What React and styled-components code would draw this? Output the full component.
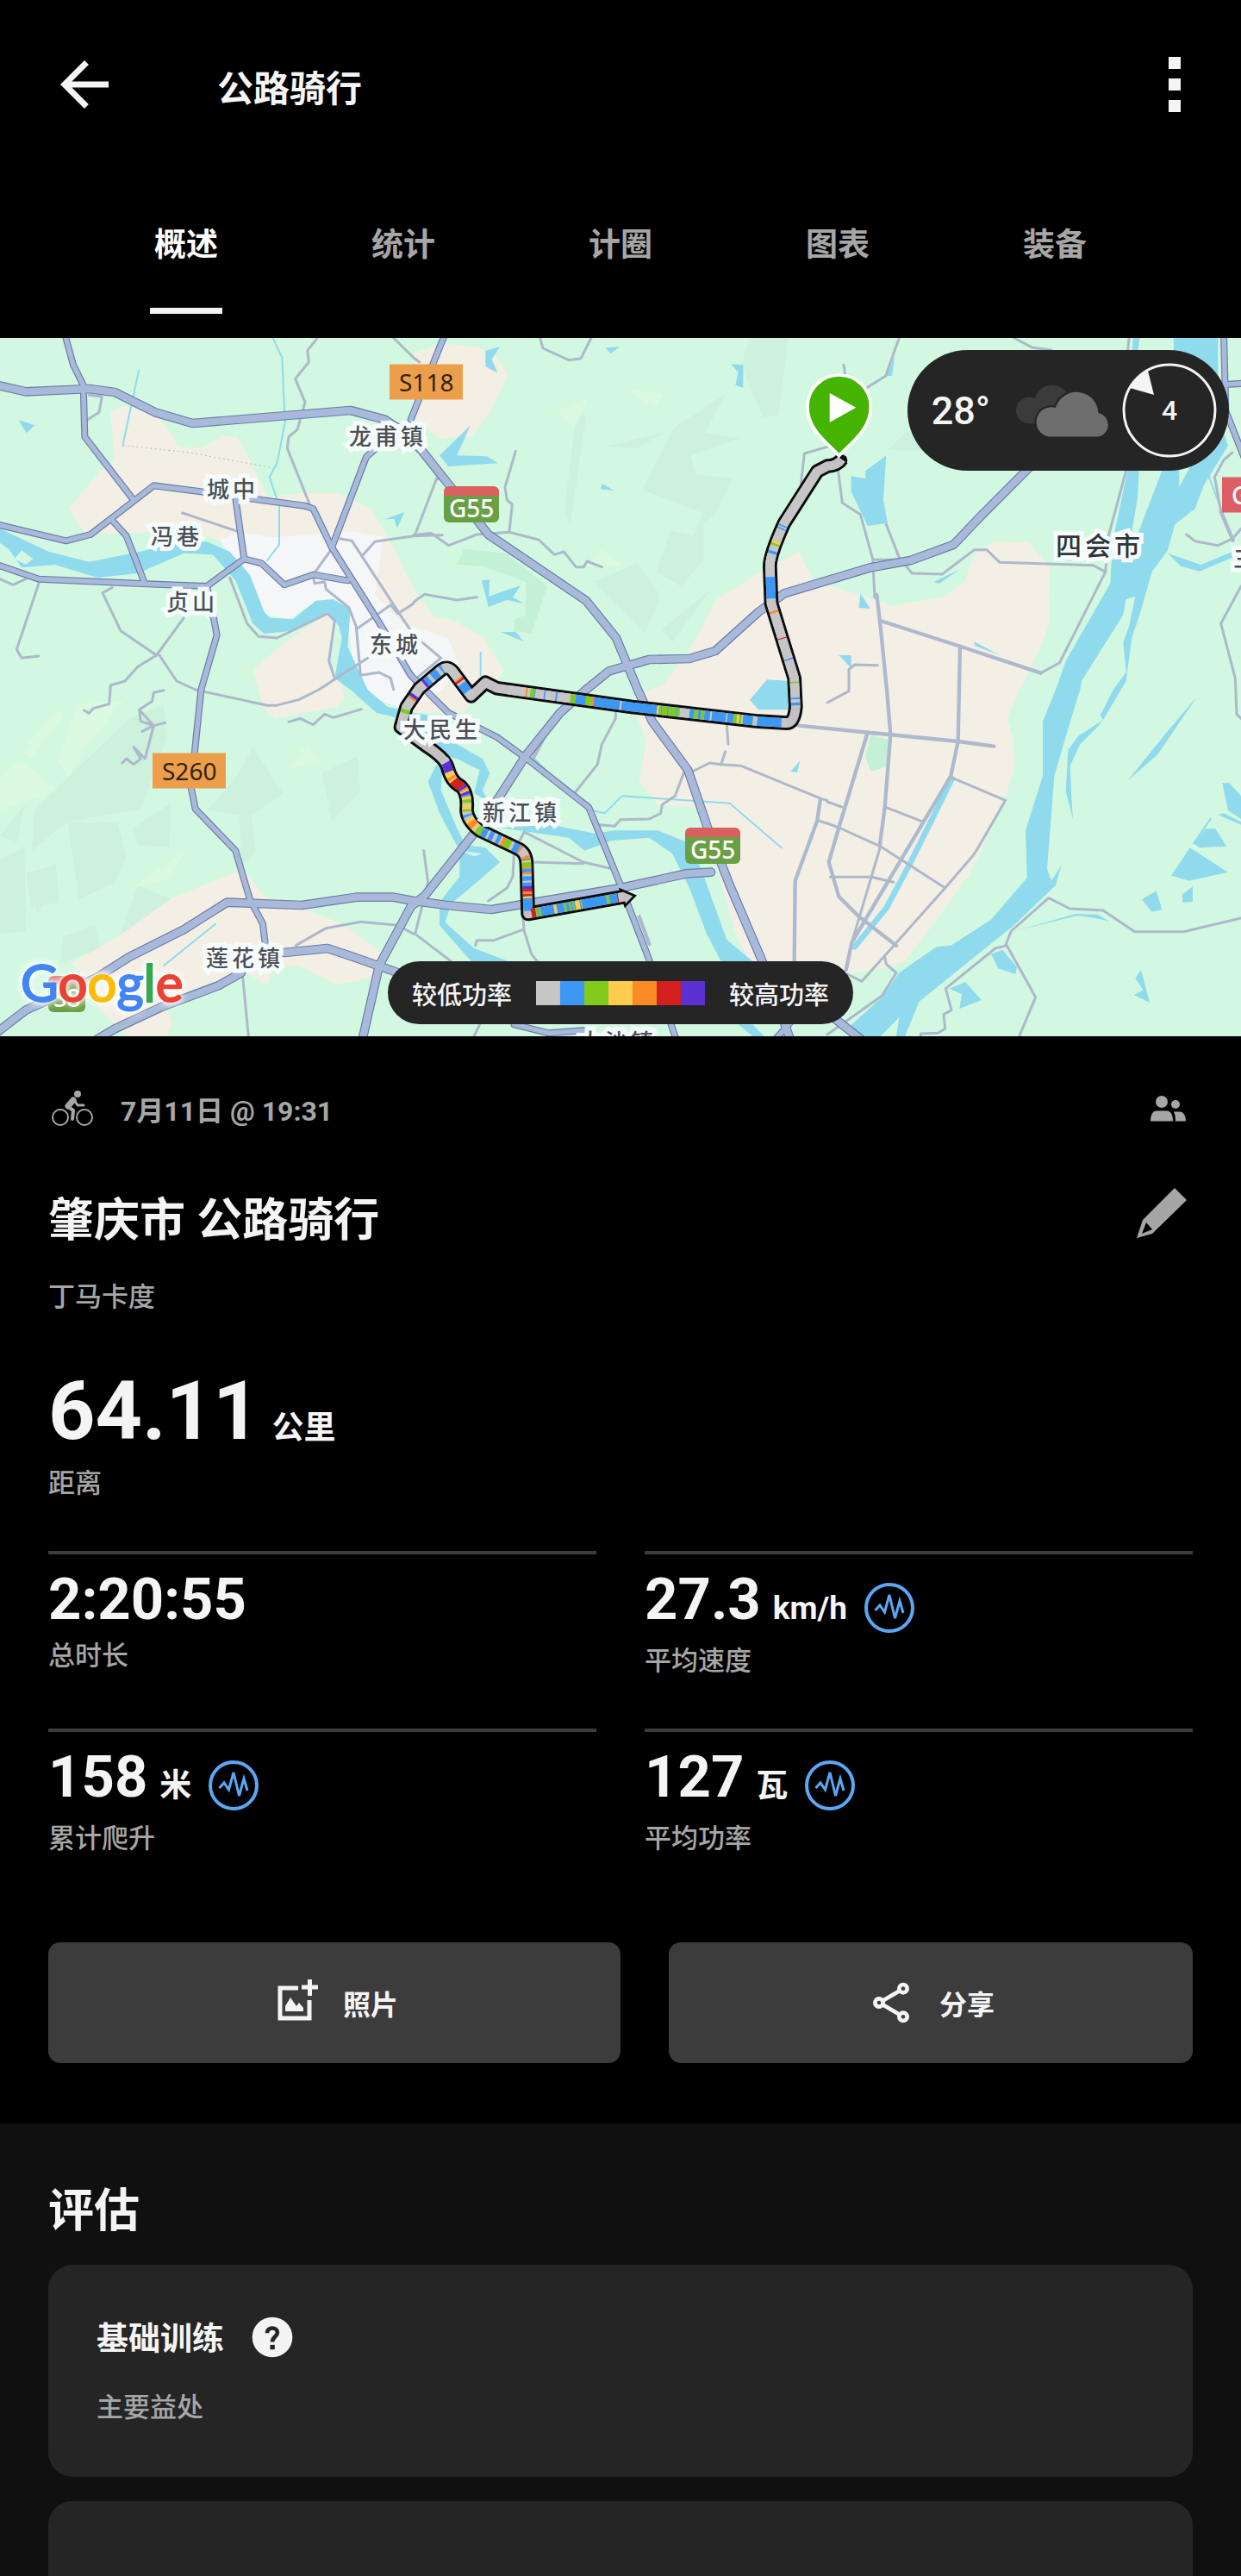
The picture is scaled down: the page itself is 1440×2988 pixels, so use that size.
import React from 'react'
import styled, { createGlobalStyle } from 'styled-components'

const GlobalStyle = createGlobalStyle`
  *, *::before, *::after {
    box-sizing: border-box;
  }

  body {
    margin: 0;
    background: #000000;
    color: #f4f4f4;
    font-family: Roboto, "Noto Sans CJK SC", sans-serif;
  }

  h1, h2, h3, p {
    margin: 0;
  }

  button {
    border: 0;
    padding: 0;
    background: none;
    color: inherit;
    font-family: inherit;
    cursor: pointer;
  }

  svg {
    display: block;
  }
`

const Page = styled.div`
  display: flex;
  flex-direction: column;
  min-height: 100vh;
`
const AppBar = styled.header`
  display: flex;
  align-items: center;
  height: 196px;
  padding: 0 28px 0 56px;
`
const AppBarTitle = styled.h1`
  flex: 1;
  margin-left: 112px;
  padding-top: 12px;
  font-size: 42px;
  line-height: 56px;
  font-weight: 700;
`
const TabList = styled.nav`
  display: flex;
  height: 196px;
  padding: 0 90px;
`
const Tab = styled.button`
  flex: 1;
  display: flex;
  flex-direction: column;
  align-items: center;
  justify-content: space-between;
  padding: 61px 0 28px;
  font-size: 37px;
  line-height: 56px;
  font-weight: 700;
  color: ${({ $active }) => ($active ? '#ffffff' : '#a6a6a6')};

  &::after {
    content: '';
    width: 84px;
    height: 7px;
    background: ${({ $active }) => ($active ? '#f4f4f4' : 'transparent')};
  }
`

const MapFrame = styled.section`
  position: relative;
  aspect-ratio: 16 / 9;
  overflow: hidden;
  background: #d2f8e1;
`
const MapCanvas = styled.svg`
  width: 100%;
  height: 100%;
`
const MapPlace = styled.span`
  position: absolute;
  left: ${({ $x }) => ($x / 1440) * 100}%;
  top: ${({ $y }) => ($y / 810) * 100}%;
  transform: translateY(-50%);
  white-space: nowrap;
`
const PlaceLabel = styled(MapPlace)`
  font-family: "Noto Sans CJK SC", sans-serif;
  font-size: ${({ $city }) => ($city ? 30 : 26)}px;
  line-height: 36px;
  font-weight: 500;
  letter-spacing: 4px;
  color: ${({ $city }) => ($city ? '#30343a' : '#4b5058')};
  -webkit-text-stroke: 10px #f6fcfb;
  paint-order: stroke fill;
`
const RoadSign = styled(MapPlace)`
  padding: 0 11px;
  background: #ed9e4b;
  color: #2d2413;
  font-family: "Noto Sans", sans-serif;
  font-size: 28px;
  line-height: 41px;
`
const RedSign = styled(RoadSign)`
  background: #dd5f64;
  color: #ffffff;
  font-weight: 500;
`
const ExpresswaySign = styled(MapPlace)`
  padding: 8px 6px 0;
  border-radius: 6px;
  background: linear-gradient(#da6060 11px, #69a045 11px);
  color: #ffffff;
  font-family: "Noto Sans", sans-serif;
  font-size: 28px;
  line-height: 34px;
  font-weight: 500;
`
const MapLogo = styled(MapPlace)`
  font-family: Lato, sans-serif;
  font-size: 60px;
  line-height: 72px;
  filter: drop-shadow(0 0 3px #ffffff) drop-shadow(0 0 4px #ffffff);
`
const LogoLetter = styled.span`
  color: ${({ $color }) => $color};
  -webkit-text-stroke: 2px ${({ $color }) => $color};
`
const Weather = styled.div`
  position: absolute;
  top: 14px;
  right: 14px;
  display: flex;
  align-items: center;
  height: 140px;
  padding: 0 14px 0 28px;
  border-radius: 70px;
  background: #252525;
`
const Temperature = styled.span`
  margin-right: 28px;
  font-size: 45px;
  font-weight: 500;
`
const WindDial = styled.div`
  display: grid;
  place-items: center;
  margin-left: 12px;
  font-size: 32px;
  font-weight: 500;

  > * {
    grid-area: 1 / 1;
  }
`
const Legend = styled.div`
  position: absolute;
  bottom: 14px;
  left: 50%;
  transform: translateX(-50%);
  display: flex;
  align-items: center;
  gap: 28px;
  height: 73px;
  padding: 0 28px;
  border-radius: 37px;
  background: #252525;
  font-size: 29px;
  font-weight: 500;
  white-space: nowrap;
`
const LegendScale = styled.div`
  display: flex;
`
const Swatch = styled.span`
  width: 28px;
  height: 28px;
  background: ${({ $color }) => $color};
`

const Summary = styled.section`
  padding: 56px 56px 70px;
`
const MetaRow = styled.div`
  display: flex;
  align-items: center;
  height: 56px;
  padding-right: 7px;
  color: #a6a6a6;
`
const ActivityTime = styled.time`
  flex: 1;
  margin-left: 28px;
  font-size: 32px;
  font-weight: 700;
`
const TitleRow = styled.div`
  display: flex;
  justify-content: space-between;
  margin-top: 64px;
  padding-right: 7px;
`
const Title = styled.h2`
  height: 72px;
  font-size: 53px;
  line-height: 77px;
  font-weight: 700;
`
const EditButton = styled.button`
  height: 58px;
`
const Muted = styled.p`
  margin-top: ${({ $gap }) => $gap}px;
  color: #a6a6a6;
  font-size: 31px;
  line-height: 40px;
  font-weight: 500;
`
const Distance = styled.p`
  margin-top: 56px;
  font-size: 95px;
  line-height: 112px;
  font-weight: 700;
`
const Unit = styled.span`
  margin-left: 14px;
  font-size: 37px;
  line-height: 1;
  font-weight: 700;
`
const StatGrid = styled.div`
  display: grid;
  grid-template-columns: 1fr 1fr;
  grid-auto-rows: minmax(206px, auto);
  column-gap: 56px;
  margin-top: 58px;
`
const Stat = styled.div`
  padding-top: 14px;
  border-top: 4px solid #3c3c3c;
`
const StatValue = styled.p`
  display: flex;
  align-items: flex-start;
  font-size: 67px;
  line-height: 76px;
  font-weight: 700;
`
const SensorButton = styled.button`
  margin: 19px 0 5px 20px;
`
const Actions = styled.div`
  display: grid;
  grid-template-columns: 664fr 608fr;
  gap: 56px;
  margin-top: 42px;
`
const ActionButton = styled.button`
  display: flex;
  align-items: center;
  justify-content: center;
  gap: 28px;
  height: 140px;
  border-radius: 14px;
  background: #3c3c3c;
  font-size: 32px;
  font-weight: 700;
`

const Assessment = styled.section`
  flex: 1;
  display: flex;
  flex-direction: column;
  padding: 64px 56px 0;
  background: #101010;
`
const Card = styled.article`
  margin-top: 28px;
  padding: 56px 56px 60px;
  border-radius: 28px;
  background: #252525;
`
const NextCard = styled(Card)`
  flex: 1;
  padding: 28px 56px 0;
  border-radius: 28px 28px 0 0;
`
const CardHeader = styled.div`
  display: flex;
  align-items: center;
  gap: 28px;
  height: 56px;
`
const CardTitle = styled.h3`
  padding-top: 6px;
  font-size: 37px;
  line-height: 56px;
  font-weight: 700;
`

const tabs = ['概述', '统计', '计圈', '图表', '装备']

const powerColors = ['#c6c6c6', '#3d98f5', '#81cb1c', '#ffcc4d', '#fc8b26', '#d3201f', '#5c31d3']

const stats = [
  { value: '2:20:55', label: '总时长' },
  { value: '27.3', unit: 'km/h', label: '平均速度', sensor: true },
  { value: '158', unit: '米', label: '累计爬升', sensor: true },
  { value: '127', unit: '瓦', label: '平均功率', sensor: true },
]

const places = [
  { name: '龙甫镇', x: 405, y: 113 },
  { name: '城中', x: 240, y: 174 },
  { name: '冯巷', x: 175, y: 229 },
  { name: '贞山', x: 193, y: 305 },
  { name: '东城', x: 429, y: 354 },
  { name: '大民生', x: 468, y: 453 },
  { name: '新江镇', x: 560, y: 549 },
  { name: '莲花镇', x: 239, y: 718 },
  { name: '大沙镇', x: 672, y: 815 },
  { name: '三水区', x: 1431, y: 255 },
  { name: '四会市', x: 1225, y: 239, city: true },
]

const logo = [
  ['G', '#4285f4'], ['o', '#ea4335'], ['o', '#fbbc05'],
  ['g', '#4285f4'], ['l', '#34a853'], ['e', '#ea4335'],
]

// Map geometry is kept at three units per pixel
const builtUp = [
  '385,265 430,240 545,275 590,330 620,385 700,390 775,345 825,352 880,450 930,560 1050,545 1180,545 1290,600 1340,680 1440,880 1510,975 1570,985 1680,1045 1755,1165 1690,1230 1610,1310 1440,1310 1300,1100 900,800 765,710 700,690 580,680 300,690 240,600 340,480 400,430',
  '1440,60 1540,25 1670,40 1720,60 1770,135 1700,270 1640,350 1530,355 1450,290',
  '880,1160 1000,1060 1150,960 1170,1000 1140,1130 1190,1210 1200,1260 1170,1290 960,1330 920,1300 900,1230',
  '820,1865 600,1955 410,2090 250,2180 300,2240 345,2340 440,2436 580,2436 600,2390 570,2310 760,2240 850,2210 930,2260 950,2190 1040,2190 1170,2255 1310,2230 1320,2140 1200,2050 1080,2000 920,1950 860,1870',
  '2780,750 2630,830 2490,920 2450,1000 2400,1090 2310,1210 2250,1235 2220,1330 2250,1410 2225,1550 2290,1630 2440,1640 2450,1690 2500,1870 2560,2080 2610,2175 2700,2230 2900,2230 2980,2215 3070,2200 3150,2175 3260,2030 3370,1880 3420,1780 3500,1600 3530,1510 3525,1390 3505,1330 3550,1230 3600,1130 3650,1010 3655,800 3580,718 3460,715 3390,760 3360,850 3290,905 3110,938 2960,890 2830,850',
]

const downtown = '765,710 830,680 950,700 1080,690 1230,680 1335,700 1305,900 1400,1000 1560,1050 1600,1150 1540,1230 1440,1290 1380,1290 1240,1230 1210,1000 1160,920 1100,920 1010,985 920,970 870,850 800,760'

const hills = [
  '2610,6 2745,6 2710,275 2655,282 2580,100',
  '2525,200 2455,335 2575,355 2405,415 2420,480 2550,495 2490,620 2450,650 2450,780 2370,870 2285,820 2335,675 2415,695 2445,615 2235,535 2345,320',
  '2310,335 2220,390 2100,385',
  '2005,280 2040,275 1985,660 1965,600',
  '2220,790 2300,905 2245,1030 2065,855',
  '2475,880 2340,1065 2305,1020',
  '570,1280 450,1330 120,1650 110,1790 235,1690 490,1645 580,1400',
  '235,1690 410,1695 440,1810 400,1900 275,1960',
  '465,1710 595,1625 590,1780 480,1770',
  '0,1820 85,1780 90,2070 0,2080',
  '90,1870 195,1840 205,1970 110,1990',
  '110,1880 180,1945 127,2010',
  '480,1910 620,1970 420,2080',
  '0,1740 60,1760 85,1630',
  '880,1430 985,1590 870,1670 720,1650 820,1540',
  '830,1560 875,1670 890,1790 840,1850',
  '1120,1520 1245,1460 1255,1585 1155,1685',
  '220,2090 330,2050 350,2130 210,2180',
  '3160,330 3240,400 3090,395',
]

const glades = [
  '2045,215 2000,320 1940,260',
  '2185,185 2310,200 2280,255',
  '2090,740 2170,800 2050,800',
  '270,1280 430,1270 300,1430 240,1530 200,1480',
  '190,1300 225,1320 110,1470 75,1450',
  '70,1470 200,1580 0,1650 0,1540',
  '1070,1420 1125,1480 990,1510',
  '640,1795 590,1890 460,1920',
]

const parks = [
  '1615,740 1760,755 1905,870 1850,1035 1790,1025 1790,985 1830,970 1830,855 1680,800 1590,795',
  '3030,1385 3098,1405 3095,1495 3032,1515 3012,1465',
]

const water = [
  '0,670 170,750 310,785 460,755 640,715 720,715 800,750 870,830 920,960 940,980 1020,985 1100,920 1160,915 1220,950 1210,1080 1280,1230 1350,1290 1440,1310 1500,1320 1590,1420 1680,1470 1705,1520 1680,1580 1700,1620 1650,1590 1670,1510 1590,1470 1540,1460 1430,1340 1310,1310 1220,1230 1165,1190 1190,1050 1180,1010 1140,960 1020,1025 920,1035 880,1000 820,850 740,760 640,755 480,825 340,840 190,795 75,805 30,740 0,720',
  '1520,1490 1490,1550 1530,1660 1600,1790 1600,1880 1530,1970 1530,2050 1600,2130 1640,2175 1770,2175 1650,2130 1550,2040 1570,1975 1660,1900 1740,1830 1690,1780 1620,1770 1590,1710 1535,1580 1540,1500',
  '1740,1710 1920,1700 2070,1730 2140,1720 2290,1720 2390,1760 2440,1850 2490,1990 2530,2100 2620,2175 2510,2175 2460,2080 2400,1920 2340,1800 2260,1745 2130,1755 2035,1790 1980,1745',
  '2570,2395 2620,2395 2660,2436 2620,2436',
  '2640,1230 2670,1195 2750,1200 2750,1300 2640,1300 2610,1265',
  '4085,0 4240,0 4240,280 4275,380 4190,520 4160,600 4090,655 4065,745 4010,820 3970,960 3940,1050 3925,1160 3920,1200 3840,1335 3830,1320 3875,1230 3920,1170 3910,1065 3930,1010 3952,905 3920,915 3910,970 3765,1200 3760,1230 3720,1360 3670,1530 3645,1855 3660,1895 3695,1840 3675,1910 3530,2050 3380,2170 3200,2315 3150,2436 3120,2436 3130,2370 3065,2436 2980,2436 2960,2400 3070,2300 3130,2215 3260,2125 3310,2120 3450,2030 3575,1885 3570,1720 3630,1530 3630,1340 3675,1230 3710,1130 3865,860 3870,770 3960,690 4045,468 4090,300',
  '3925,468 3965,468 3960,560 3940,680 3880,680',
  '3945,0 3968,0 3960,60 3940,60',
  '3840,1335 3820,1360 3760,1420 3725,1495 3730,1610 3735,1680 3710,1585 3718,1440 3755,1390',
  '4065,755 4180,795 4290,750 4290,770 4175,818 4110,800',
  '4170,1250 4060,1380 3925,1547 4030,1455',
  '4255,1555 4280,1555 4320,1600 4320,1680 4275,1650',
  '4240,1665 4260,1660 4320,1690 4320,1700',
  '4155,1765 4195,1715 4230,1713 4270,1775 4175,1780',
  '4142,1780 4275,1865 4140,1895 4077,1877',
  '3975,1960 4025,1930 4045,1995 4010,2003',
  '4116,1942 4152,1915 4152,1968 4116,1970',
  '3450,2150 3490,2135 3540,2195 3535,2220 3475,2200',
  '3305,2270 3360,2247 3417,2310 3340,2340 3348,2290',
  '3972,2205 4002,2318 3947,2293 3980,2275 3952,2235',
  '3540,2068 3745,2010 3820,2012 3860,2035 3800,2023 3750,2016',
  '3085,415 3075,570 3090,650 3020,660 2963,540 2963,487 3013,495 3013,468',
  '3115,70 3105,138 3085,138',
  '2995,895 3030,948 2990,945',
  '2920,1110 2963,1110 2963,1155',
  '3250,855 3340,812 3270,860',
  '3390,1062 3480,1110 3395,1078',
  '2752,1515 2785,1477 2775,1518',
  '1690,50 1740,37 1712,80 1732,128 1690,105',
  '1638,310 1590,415 1695,418 1733,442 1560,453 1530,415',
  '2108,40 2158,37 2125,60',
  '2545,97 2587,100 2587,180 2560,170 2570,125',
  '2097,513 2137,537 2090,532',
  '1677,850 1704,847 1702,905 1812,867 1785,908 1823,930 1765,918 1700,942',
  '1743,1030 1795,1028 1823,1062',
  '65,292 122,310 92,337',
  '1340,637 1408,612 1382,668 1372,635',
]

const islands = [
  '75,745 50,775 90,795 115,775',
  '4105,440 4150,440 4105,525',
  '1600,1790 1680,1800 1650,1810',
]

const streams = [
  '483,120 427,380',
  '950,6 982,75 992,300 965,440 938,490 972,590 972,725 930,780',
  '2060,1650 2105,1660 2165,1600 2540,1625 2720,1780',
  '1673,1100 1673,1180',
  '4205,480 4250,600',
  '4155,1765 4215,1678',
  '1860,1470 1910,1520',
  '750,2045 570,2190',
]

const canal = '3314,1540 3240,1690 3160,1850 3085,1990 2975,2125'

const lanes = [
  '1105,6 1070,50 1075,90 1028,148 1062,230 1035,325 1005,350 1000,390 1080,590',
  '310,205 355,210 345,265 305,290',
  '1370,6 1440,75 1460,90',
  '635,615 830,680',
  '0,845 45,865 90,845',
  '135,860 58,1090 75,1120 135,1113',
  '390,875 357,893 420,1025 545,1110 640,980',
  '545,1110 480,1150 435,1200 385,1215 380,1280 325,1295 310,1312 293,1302',
  '555,1110 615,1200 680,1230 930,1285 960,1285 1040,1265 1110,1230 1210,1165 1280,1120',
  '800,840 860,1000 900,1045 965,1050 1140,965 1165,990 1145,1130 1165,1190',
  '1155,740 1090,830 1095,860 1130,855 1135,880 1215,945 1240,1010 1255,1180 1320,1170 1360,1190 1370,1230',
  '1185,705 1225,712 1400,980 1440,1040 1535,1120 1450,1190',
  '1540,692 1440,695 1305,715 1260,765',
  '1240,1020 1360,935 1385,965 1440,930',
  '570,1232 535,1240 530,1270 485,1300 490,1340 535,1355 575,1345',
  '485,1300 535,1355 495,1375',
  '535,1355 505,1470 465,1430 490,1470 465,1490 440,1470 425,1485',
  '1005,1342 1045,1330 1090,1352 1130,1315 1160,1327 1258,1298',
  '1030,2120 1135,2060 1255,2038 1385,2050 1440,2080',
  '845,2230 865,2436',
  '1880,6 1890,42 1980,83 2022,77 2058,6',
  '1795,400 1758,525 1765,570 1783,585 1773,680',
  '1440,692 1500,685 1562,728 1660,690 1773,682 1875,708 1930,760 1963,750 2005,803 2032,803 2043,783 2095,803',
  '1445,690 1520,495 1545,500',
  '1440,925 1478,898 1590,918 1660,908',
  '2880,385 2800,408 2788,515',
  '3130,6 3083,138 3020,178',
  '2937,100 2942,135',
  '3530,6 3595,40 3660,48',
  '3930,6 3925,60',
  '2918,470 2932,580 2995,620 3038,775 3045,910',
  '3085,655 3130,770 3175,825 3280,828 3392,743 3435,743 3480,787 3805,797 3848,820 3688,1137 3623,1172',
  '3038,778 3135,778',
  '2955,1230 2955,1160 2975,1143 3055,1145',
  '2880,1275 2955,1235',
  '3920,468 3860,690 3848,820',
  '4290,405 4260,430 4228,490 4250,610 4290,705 4240,728 4160,713 4130,690',
  '4290,705 4320,670',
  '4320,870 4250,1000 4300,1190 4305,1315 4320,1330',
  '2890,1882 3035,1882 3110,1900',
  '3085,1640 3215,1690',
  '2880,1620 2930,1638',
  '3310,1535 3500,1615 3405,1780 3385,1810 3290,1920 3000,2245 2950,2220',
  '2880,1695 2920,1710 3065,1775 3290,1920',
  '3065,1775 2965,2110',
  '3080,2160 3085,2185 3120,2215 3070,2295 2880,2430',
  '3205,2436 3205,2427 3265,2425 3290,2410 3285,2360 3312,2345 3292,2270 3465,2130 3505,2120 3605,2300 3548,2436',
  '3500,2120 3520,2070 3650,1955 3725,1992 3840,1998 3950,2072 4120,2072 4320,2025',
  '2143,1310 2143,1330 2095,1420 2080,1490 2000,1590',
  '2530,1350 2535,1420',
  '2525,1445 2510,1490',
  '2510,1490 2580,1495 2860,1610 2880,1615',
  '2510,1490 2470,1485 2410,1515 2380,1520 2350,1600 2305,1630 2300,1660 2260,1680 2160,1682 2140,1705 2085,1700',
  '2845,1685 2880,1695',
  '1825,1725 2030,1830 2125,1852',
  '1850,1830 2030,1835',
  '1825,1725 1790,1790 1785,1880 1765,1920 1700,1965',
  '1475,1790 1490,1900 1445,2080 1570,2175',
  '1820,2020 1825,2070 1850,2150 1870,2175',
  '1820,2065 1720,2102 1660,2102 1655,2120',
  '1670,2395 1650,2436',
]

const streets = [
  '3052,900 3065,1010 3087,1230 3100,1385 3080,1640 3062,1775',
  '3065,990 3345,1080 3623,1172',
  '3342,1080 3335,1410 3310,1530 2965,2110 2945,2205',
  '2780,1355 3335,1410 3460,1427',
  '3020,1380 2920,1710 2885,1830 2920,1950 2990,2020',
  '2990,2020 3120,2120',
  '2855,1615 2845,1685 2768,1895 2765,2175',
  '1940,1310 1855,1470',
  '2225,2020 2260,2115',
  '4250,610 4292,710',
]

const roads = [
  '225,-10 255,100 290,170 295,350 465,570',
  '-10,655 230,712 315,690 535,520 710,542 870,565 1060,590 1090,600 1155,735 1310,980 1430,1180 1560,1310 1730,1395 1840,1475 2050,1640 2160,1910 2260,2170 2350,2436',
  '820,565 850,775 910,790 990,865 1090,830 1210,850',
  '850,775 720,870 510,862 135,845 -10,795',
  '390,640 440,695 500,850',
  '720,870 740,960 755,1040 700,1230 665,1570 680,1645 820,1790 870,1960 915,2045 925,2130',
  '1155,735 1275,420 1310,390',
  '1430,290 1550,-10',
  '4260,-10 4267,260 4330,420',
  '4267,168 4330,164',
  '2700,2445 2750,2390',
  '1790,2395 1910,2425 2040,2415',
]

const highways = [
  '-20,168 90,193 310,183 400,195 540,265 670,303 1220,258 1340,290 1400,330 1470,400 1700,690 2040,920 2145,1050 2220,1230 2270,1340 2395,1510 2470,1730 2540,1910 2660,2190 2750,2445',
  '-20,2430 90,2345 190,2300 340,2230 450,2160 640,2065 790,1970 1050,1980 1240,1952 1370,1952 1440,1965 1555,1980 1710,1995 2160,1920 2390,1870 2475,1865',
  '340,2445 400,2410 560,2335 760,2260 840,2215',
  '990,2145 1140,2130 1230,2160 1400,2220 1500,2280',
  '1262,2445 1320,2190 1430,1985 1480,1945 1650,1730 1740,1600 1830,1460 1950,1310 2040,1230 2120,1165 2260,1125 2400,1122 2490,1095 2640,960 2730,895 2880,850 3030,805 3170,780 3320,725 3420,620 3580,460 3700,330',
  '2900,2370 2995,2445',
]

const ride = 'M2930,428 Q2915,450 2880,452 L2845,470 L2730,650 Q2680,760 2680,800 L2685,930 L2765,1190 L2770,1290 Q2765,1345 2740,1346 L2640,1340 L2200,1290 L1730,1225 L1690,1205 L1640,1252 L1575,1165 Q1555,1145 1535,1162 L1460,1225 L1415,1290 L1395,1360 L1490,1430 Q1550,1470 1558,1500 Q1570,1550 1605,1567 Q1628,1590 1625,1640 Q1620,1680 1670,1720 L1800,1782 Q1833,1795 1833,1840 L1838,2010 L2175,1950'

const zoneColors = {
  g: powerColors[0],
  b: powerColors[1],
  n: powerColors[2],
  y: powerColors[3],
  o: powerColors[4],
  r: powerColors[5],
  p: powerColors[6],
}

// Each leg lists its power zones as colour key + length along the path
const legs = [
  {
    d: 'M2845,470 L2730,650 Q2680,760 2680,800 L2685,930 L2765,1190 L2770,1290',
    zones: 'g222 b5 g5 b5 g45 y8 n8 g20 b10 g82 b76 g44 o8 g90 r4 g72 b5 g78 n5 g50 b6 g12 b10 g30',
  },
  {
    d: 'M2740,1346 L2640,1340 L2200,1290 L1730,1225',
    zones: 'g20 b85 g15 b35 g5 n8 y8 n12 b22 g4 b50 g6 b20 n12 b10 n14 b16 g34 n10 b4 n26 b4 n18 b4 n8 y6 b124 g6 b92 o8 n20 b36 n18 g46 b6 g36 b5 g30 b4 n14 g10 o6 g60',
  },
  {
    d: 'M1640,1252 L1575,1165 Q1555,1145 1535,1162 L1460,1225 L1415,1290 L1395,1360',
    zones: 'g20 b34 g8 r8 o6 g70 b8 g12 b26 g12 b16 p10 g50 p12 o8 g40 n14 g30',
  },
  {
    d: 'M1545,1474 Q1555,1485 1558,1500 Q1570,1550 1605,1567 Q1628,1590 1625,1640 Q1620,1680 1670,1720 L1800,1782 Q1833,1795 1833,1840 L1838,2000',
    zones: 'g12 p34 y18 o10 y6 r36 p10 o6 y6 p10 b6 y10 n12 g8 y14 n8 g10 b8 g8 y12 o20 y8 g6 n18 b20 g8 b16 g12 b14 g6 o12 n22 g10 b22 o8 g26 o10 b6 y6 n16 o6 b12 o8 g6 b16 g6 b12 p10 r10 o8 r8 y6 b60',
  },
  {
    d: 'M1850,2008 L2168,1951',
    zones: 'r16 n6 b4 n8 b46 g2 y8 b26 n8 b10 n6 b6 n6 b4 y16 b4 n4 b86 n10 b28 r4 g14',
  },
]

const zoneDashes = (zones) => {
  let start = 0

  return zones.split(' ').map((zone) => {
    const length = Number(zone.slice(1))
    const dash = { color: zoneColors[zone[0]], array: `0 ${start} ${length} 9999`, start }
    start += length
    return dash
  })
}

const Lines = ({ items, color, width }) => (
  <g fill="none" stroke={color} strokeWidth={width} strokeLinejoin="round" strokeLinecap="round">
    {items.map((points) => <polyline key={points} points={points} />)}
  </g>
)

const Areas = ({ items, color }) => (
  <g fill={color}>
    {items.map((points) => <polygon key={points} points={points} />)}
  </g>
)

const RouteMap = () => (
  <MapCanvas viewBox="0 6 4320 2430" preserveAspectRatio="none" aria-hidden="true">
    <Areas items={hills} color="#cdf1dd" />
    <Areas items={glades} color="#dbf9e1" />
    <Areas items={builtUp} color="#f4efe5" />
    <Areas items={[downtown]} color="#f5f6f8" />
    <Areas items={parks} color="#c4f1d6" />
    <Areas items={water} color="#90daee" />
    <Areas items={islands} color="#d2f8e1" />
    <Lines items={streams} color="#90daee" width={6} />
    <Lines items={[canal]} color="#90daee" width={20} />
    <polyline points="427,380 660,405 950,458" fill="none" stroke="#b5c4c4" strokeWidth="3" strokeDasharray="7 9" />
    <Lines items={lanes} color="#adb9ca" width={9} />
    <Lines items={streets} color="#adb9ce" width={13} />
    <Lines items={roads} color="#6a7ca6" width={24} />
    <Lines items={highways} color="#6a7ca6" width={32} />
    <Lines items={roads} color="#a9b9da" width={17} />
    <Lines items={highways} color="#a9b9da" width={25} />

    <path d={ride} fill="none" stroke="#0b0d0e" strokeWidth="50" strokeLinejoin="round" />
    <circle cx="2930" cy="432" r="20" fill="#0b0d0e" />
    <path d="M2160,1926 L2210,1947 L2176,1982 Z" fill="#c4c1c4" stroke="#0b0d0e" strokeWidth="8" />
    <path d={ride} fill="none" stroke="#c4c1c4" strokeWidth="32" strokeLinejoin="round" />
    {legs.map(({ d, zones }) => (
      <g key={d} fill="none" strokeWidth="32">
        {zoneDashes(zones).map(({ color, array, start }) => (
          <path key={start} d={d} stroke={color} strokeDasharray={array} />
        ))}
      </g>
    ))}

    <path
      d="M2921,416 C2890,378 2811,330 2811,245 A110,110 0 0 1 3031,245 C3031,330 2952,378 2921,416 Z"
      fill="#45b400"
      stroke="#ffffff"
      strokeWidth="11"
    />
    <path d="M2888,198 L2980,248 L2888,300 Z" fill="#ffffff" />
  </MapCanvas>
)

const CloudIcon = () => (
  <svg width="113" height="65" viewBox="650 160 340 195" aria-hidden="true">
    <g fill="#3b3b3b">
      <circle cx="782" cy="230" r="62" />
      <circle cx="702" cy="256" r="46" />
      <path d="M700 230h90v72h-90z" />
    </g>
    <path
      d="M770 348a52 52 0 1 1 24-101 76 76 0 0 1 149 18 42 42 0 0 1-3 83z"
      fill="#6e6e6e"
      stroke="#252525"
      strokeWidth="14"
      paintOrder="stroke"
    />
  </svg>
)

const BackIcon = () => (
  <svg width="84" height="84" viewBox="0 0 24 24" fill="#f4f4f4" aria-hidden="true">
    <path d="M20 11H7.83l5.59-5.59L12 4l-8 8 8 8 1.41-1.41L7.83 13H20v-2z" />
  </svg>
)

const MoreIcon = () => (
  <svg width="98" height="84" viewBox="0 0 98 84" fill="#f4f4f4" aria-hidden="true">
    <path d="M42 10h14v14H42zM42 35h14v14H42zM42 60h14v14H42z" />
  </svg>
)

const BikeIcon = () => (
  <svg width="56" height="56" viewBox="0 0 56 56" fill="none" stroke="currentColor" aria-hidden="true">
    <circle cx="14" cy="38" r="9" strokeWidth="2" />
    <circle cx="42" cy="38" r="9" strokeWidth="2" />
    <circle cx="34" cy="11" r="4" fill="currentColor" stroke="none" />
    <path d="M29 18l-6 7" strokeWidth="7" strokeLinecap="round" />
    <path d="M22 25l7 5-1 10" strokeWidth="4" strokeLinejoin="round" strokeLinecap="round" />
    <path d="M30 18l4 6h7" strokeWidth="3" strokeLinejoin="round" strokeLinecap="round" />
  </svg>
)

const PeopleIcon = () => (
  <svg width="42" height="30" viewBox="0 0 42 30" fill="currentColor" aria-hidden="true">
    <circle cx="13" cy="7" r="7" />
    <circle cx="29" cy="10" r="5" />
    <path d="M0 29.500c0-8 3-12 7-12h12c4 0 7 4 7 12z" />
    <path d="M27 18.500h7c4 0 7 4 7 11H29c0-5-.5-8-2-11z" />
  </svg>
)

const PencilIcon = () => (
  <svg width="58" height="58" viewBox="0 0 58 58" aria-hidden="true">
    <path d="M44 0l14 14-40 39L0 58l7-21z" fill="#a6a6a6" />
    <path d="M11 40l7 8-12 5z" fill="#000000" />
  </svg>
)

const PulseIcon = () => (
  <svg width="58" height="58" viewBox="0 0 58 58" fill="none" stroke="#5ba7f3" aria-hidden="true">
    <circle cx="29" cy="29" r="27" strokeWidth="4" />
    <path d="M12.500 32l5.500-6 5.500 8L29 14l6.500 27 5.500-20 4 14" strokeWidth="3" />
  </svg>
)

const PhotoIcon = () => (
  <svg width="56" height="56" viewBox="0 0 56 56" fill="none" stroke="#f4f4f4" strokeWidth="5" aria-hidden="true">
    <path d="M32 11H11v35h34V25" />
    <path d="M36 10h19M45.500 1v19" />
    <path d="M17 38V32l6-10 7 10 3-4 5 6v4z" fill="#f4f4f4" stroke="none" />
  </svg>
)

const ShareIcon = () => (
  <svg width="56" height="56" viewBox="0 0 24 24" fill="none" stroke="#f4f4f4" strokeWidth="2" aria-hidden="true">
    <circle cx="18" cy="5" r="2" />
    <circle cx="6" cy="12" r="2" />
    <circle cx="18" cy="19" r="2" />
    <path d="M16 6.200L8 10.900M8 13.100l8 4.700" />
  </svg>
)

const HelpIcon = () => (
  <svg width="56" height="56" viewBox="0 0 24 24" aria-hidden="true">
    <circle cx="12" cy="12" r="10" fill="#f4f4f4" />
    <path d="M9.400 10C9.400 8.300 10.500 7.500 12 7.500s2.500.9 2.500 2.300c0 1.900-2.500 2-2.500 4.600" fill="none" stroke="#252525" strokeWidth="2" />
    <path d="M10.900 15.800h2.300v2.300h-2.300z" fill="#252525" />
  </svg>
)

const ActivityMap = () => (
  <MapFrame aria-label="路线">
    <RouteMap />
    {places.map(({ name, x, y, city }) => (
      <PlaceLabel key={name} $x={x} $y={y} $city={city}>{name}</PlaceLabel>
    ))}
    <RoadSign $x={452} $y={51}>S118</RoadSign>
    <RoadSign $x={177} $y={502}>S260</RoadSign>
    <ExpresswaySign $x={515} $y={193}>G55</ExpresswaySign>
    <ExpresswaySign $x={795} $y={589}>G55</ExpresswaySign>
    <ExpresswaySign $x={56} $y={761}>S8</ExpresswaySign>
    <RedSign $x={1418} $y={182}>G321</RedSign>
    <MapLogo $x={24} $y={747} aria-label="Google">
      {logo.map(([letter, color], i) => (
        <LogoLetter key={i} $color={color}>{letter}</LogoLetter>
      ))}
    </MapLogo>
    <Weather>
      <Temperature>28°</Temperature>
      <CloudIcon />
      <WindDial>
        <svg width="110" height="110" viewBox="-55 -55 110 110" aria-hidden="true">
          <circle r="53" fill="none" stroke="#f4f4f4" strokeWidth="3" />
          <path d="M-46 -26A53 53 0 0 1 -25 -46L-18 -18z" fill="#f4f4f4" />
        </svg>
        <span>4</span>
      </WindDial>
    </Weather>
    <Legend>
      <span>较低功率</span>
      <LegendScale>
        {powerColors.map((color) => <Swatch key={color} $color={color} />)}
      </LegendScale>
      <span>较高功率</span>
    </Legend>
  </MapFrame>
)

const App = () => (
  <Page>
    <GlobalStyle />
    <AppBar>
      <button type="button" aria-label="返回"><BackIcon /></button>
      <AppBarTitle>公路骑行</AppBarTitle>
      <button type="button" aria-label="更多"><MoreIcon /></button>
    </AppBar>
    <TabList>
      {tabs.map((tab, i) => (
        <Tab key={tab} type="button" $active={i === 0}>{tab}</Tab>
      ))}
    </TabList>

    <ActivityMap />

    <Summary>
      <MetaRow>
        <BikeIcon />
        <ActivityTime>7月11日 @ 19:31</ActivityTime>
        <PeopleIcon />
      </MetaRow>
      <TitleRow>
        <Title>肇庆市 公路骑行</Title>
        <EditButton type="button" aria-label="编辑"><PencilIcon /></EditButton>
      </TitleRow>
      <Muted $gap={35}>丁马卡度</Muted>
      <Distance>64.11<Unit>公里</Unit></Distance>
      <Muted $gap={8}>距离</Muted>
      <StatGrid>
        {stats.map(({ value, unit, label, sensor }) => (
          <Stat key={label}>
            <StatValue>
              <span>{value}{unit && <Unit>{unit}</Unit>}</span>
              {sensor && (
                <SensorButton type="button" aria-label={`${label}传感器`}><PulseIcon /></SensorButton>
              )}
            </StatValue>
            <Muted $gap={8}>{label}</Muted>
          </Stat>
        ))}
      </StatGrid>
      <Actions>
        <ActionButton type="button"><PhotoIcon />照片</ActionButton>
        <ActionButton type="button"><ShareIcon />分享</ActionButton>
      </Actions>
    </Summary>

    <Assessment>
      <Title>评估</Title>
      <Card>
        <CardHeader>
          <CardTitle>基础训练</CardTitle>
          <button type="button" aria-label="帮助"><HelpIcon /></button>
        </CardHeader>
        <Muted $gap={34}>主要益处</Muted>
      </Card>
      <NextCard />
    </Assessment>
  </Page>
)

export default App
